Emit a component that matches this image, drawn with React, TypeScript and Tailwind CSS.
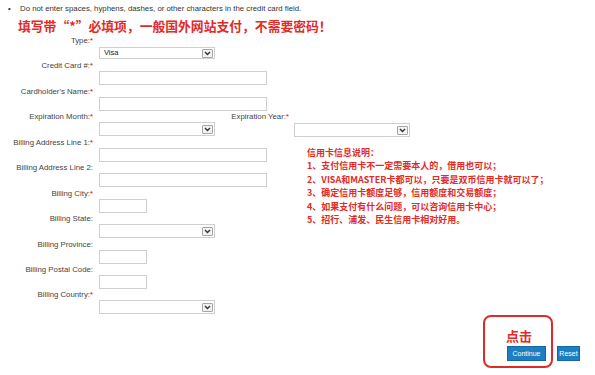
import React from 'react';

const RED = 'text-[#e22b26]';

function Req() {
  return <span className="text-[#e00000]">*</span>;
}

function Arrow() {
  return (
    <span className="flex h-[9px] w-[11px] items-center justify-center rounded-[1px] border border-[#a6a6a6] bg-[#f2f2f2]">
      <svg width="7" height="5" viewBox="0 0 7 5">
        <path d="M1 1 L3.5 3.5 L6 1" fill="none" stroke="#333" strokeWidth="1.4" />
      </svg>
    </span>
  );
}

function Select({ value = '', small = false }: { value?: string; small?: boolean }) {
  return (
    <div
      className={`flex w-[116px] items-center justify-between border border-[#cfcfcf] bg-white pl-[4px] pr-[1px] ${
        small ? 'h-[12px]' : 'h-[14px]'
      }`}
    >
      <span className="text-[7.5px] leading-none text-[#222]">{value}</span>
      <Arrow />
    </div>
  );
}

function Input({ short = false }: { short?: boolean }) {
  return <div className={`h-[14px] border border-[#cfcfcf] bg-white ${short ? 'w-[48px]' : 'w-[168px]'}`} />;
}

function Row({ label, req, children, first = false }: { label: string; req?: boolean; children: React.ReactNode; first?: boolean }) {
  return (
    <div className="flex h-[25.45px]">
      <div className="w-[96px] flex-none pr-[3px] text-right leading-[10px]">
        {label}
        {req && <Req />}
      </div>
      <div className={`pl-[3px] ${first ? 'mt-[11px]' : 'mt-[10px]'}`}>{children}</div>
    </div>
  );
}

const notes = [
  '1、支付信用卡不一定需要本人的，借用也可以；',
  '2、VISA和MASTER卡都可以，只要是双币信用卡就可以了；',
  '3、确定信用卡额度足够，信用额度和交易额度；',
  '4、如果支付有什么问题，可以咨询信用卡中心；',
  '5、招行、浦发、民生信用卡相对好用。',
];

export default function App() {
  return (
    <div className="relative h-[375px] w-[595px] overflow-hidden bg-white font-['Liberation_Sans',Arial,sans-serif] text-[7.8px] text-[#444]">
      <div className="flex pl-[8px] pt-[4px] leading-[10px] text-[#333]">
        <span className="w-[12px]">•</span>
        <span>Do not enter spaces, hyphens, dashes, or other characters in the credit card field.</span>
      </div>
      <div className={`mt-[2px] pl-[18px] font-['Noto_Sans_CJK_SC',sans-serif] text-[12.8px] font-bold leading-[20px] ${RED}`}>
        填写带“*”必填项，一般国外网站支付，不需要密码！
      </div>

      <div>
        <Row label="Type:" req first>
          <Select value="Visa" small />
        </Row>
        <Row label="Credit Card #:" req>
          <Input />
        </Row>
        <Row label="Cardholder's Name:" req>
          <Input />
        </Row>
        <div className="flex h-[25.45px]">
          <div className="w-[96px] flex-none pr-[3px] text-right leading-[10px]">
            Expiration Month:<Req />
          </div>
          <div className="mt-[10px] pl-[3px]">
            <Select />
          </div>
          <div className="w-[76px] flex-none pr-[2px] text-right leading-[10px]">
            Expiration Year:<Req />
          </div>
          <div className="mt-[11px] pl-[3px]">
            <Select />
          </div>
        </div>
        <Row label="Billing Address Line 1:" req>
          <Input />
        </Row>
        <Row label="Billing Address Line 2:">
          <Input />
        </Row>
        <Row label="Billing City:" req>
          <Input short />
        </Row>
        <Row label="Billing State:">
          <Select />
        </Row>
        <Row label="Billing Province:">
          <Input short />
        </Row>
        <Row label="Billing Postal Code:">
          <Input short />
        </Row>
        <Row label="Billing Country:" req>
          <Select />
        </Row>
      </div>

      <div className="mt-[30px] flex justify-end gap-[11px] pr-[15px]">
        <button className="h-[15px] w-[39px] border border-[#15679f] bg-[#1d7fc2] text-[7px] leading-none text-white">
          Continue
        </button>
        <button className="h-[15px] w-[23px] border border-[#15679f] bg-[#1d7fc2] text-[7px] leading-none text-white">
          Reset
        </button>
      </div>

      {/* red annotations laid over the form */}
      <div className={`absolute left-[307px] top-[146px] font-['Noto_Sans_CJK_SC',sans-serif] text-[9px] font-bold leading-[13.4px] ${RED}`}>
        <div>信用卡信息说明：</div>
        {notes.map((n) => (
          <div key={n}>{n}</div>
        ))}
      </div>

      <div className="absolute left-[483px] top-[315px] h-[53px] w-[70px] rounded-[8px] border-2 border-[#e02a2a] pl-[21px] pt-[11.5px]">
        <span className={`font-['Noto_Sans_CJK_SC',sans-serif] text-[13px] font-bold leading-[14px] ${RED}`}>点击</span>
      </div>
    </div>
  );
}
